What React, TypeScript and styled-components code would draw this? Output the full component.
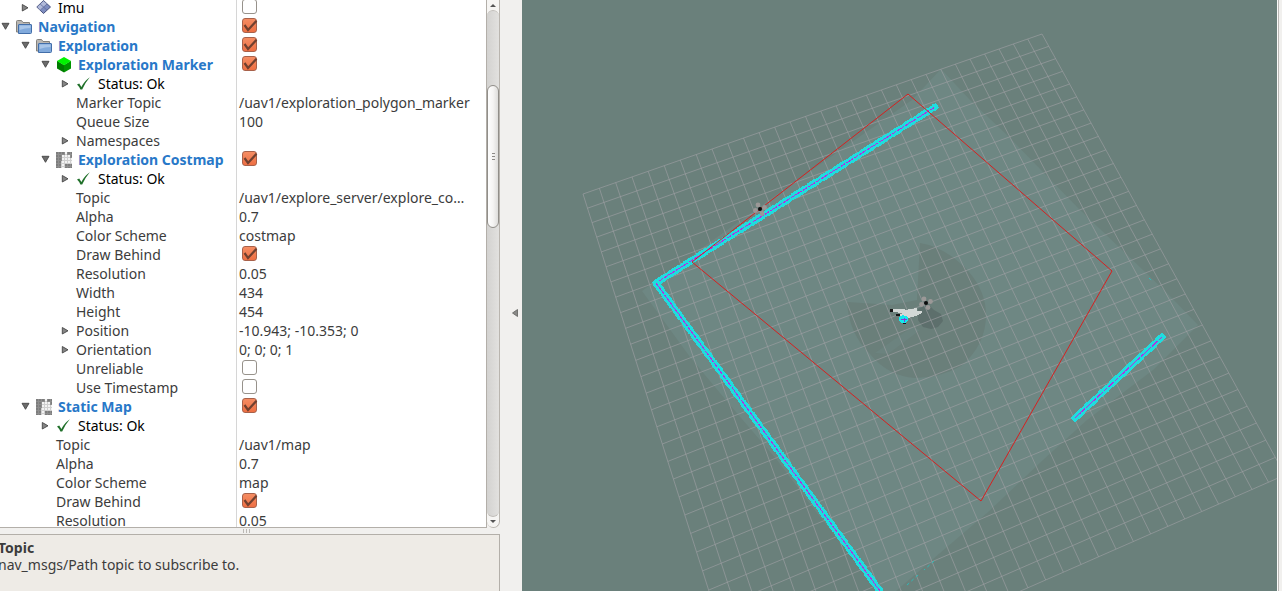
import React from 'react';
import styled, { createGlobalStyle, css } from 'styled-components';

const GlobalStyle = createGlobalStyle`
  *, *::before, *::after { box-sizing: border-box; }
  html, body { margin: 0; height: 100%; }
  #root { height: 100%; }
  body {
    overflow: hidden;
    background: #f1f0ee;
    color: #3c3c3c;
    font-family: 'Noto Sans', 'Open Sans', sans-serif;
    font-size: 14px;
  }
`;

const Window = styled.div`
  display: flex;
  height: 100vh;
  overflow: hidden;
`;

const DisplaysPanel = styled.aside`
  display: flex;
  flex-direction: column;
  flex: none;
  width: 500px;
`;

const TreeArea = styled.div`
  display: flex;
  flex: 1;
  min-height: 0;
`;

const TreeView = styled.div`
  display: flex;
  flex: 1;
  min-width: 0;
  overflow: hidden;
  background: #fff;
  border-right: 1px solid #b3afa9;
  border-bottom: 1px solid #b3afa9;
`;

const TreeTable = styled.table`
  flex: 1;
  width: 100%;
  margin-top: -2px;
  border-collapse: separate;
  border-spacing: 0;
  table-layout: fixed;
  align-self: flex-start;
`;

const TreeRow = styled.tr`
  height: 19px;
`;

const NameCell = styled.th`
  width: 237px;
  height: 19px;
  padding: 0;
  border-right: 1px solid #d6d6d6;
  font-weight: 400;
  text-align: left;
`;

const ValueCell = styled.td`
  height: 19px;
  padding: 0 4px 0 2px;
  line-height: 19px;
  overflow: hidden;
  text-overflow: ellipsis;
  white-space: nowrap;
`;

type Tone = 'display' | 'plain' | 'property';

const toneStyle = {
  display: css`color: #2878c8; font-weight: 700;`,
  plain: css`color: #000;`,
  property: css`color: #3c3c3c;`,
};

const NameContent = styled.div<{ $depth: number }>`
  display: flex;
  align-items: center;
  height: 19px;
  padding-left: ${({ $depth }) => $depth * 20}px;
  line-height: 19px;
  white-space: nowrap;
`;

const Label = styled.span<{ $tone: Tone }>`
  ${({ $tone }) => toneStyle[$tone]}
`;

const ExpanderSlot = styled.span`
  display: flex;
  flex: none;
  width: 16px;
`;

const Expander = styled.button`
  display: flex;
  width: 12px;
  height: 12px;
  padding: 0;
  border: 0;
  background: none;
`;

const IconSlot = styled.span`
  display: flex;
  flex: none;
  width: 22px;
`;

const Check = styled.label`
  display: grid;
  width: 18px;
  height: 17px;
  margin-left: 2px;
  svg { grid-area: 1 / 1; visibility: hidden; pointer-events: none; }
  input:checked + svg { visibility: visible; }
`;

const CheckInput = styled.input`
  grid-area: 1 / 1;
  appearance: none;
  width: 15px;
  height: 15px;
  margin: 0 1px;
  border: 1px solid #97928b;
  border-radius: 3px;
  background: #fff;
  &:checked {
    border-color: #a8614a;
    background: linear-gradient(#f58d63, #ee6f43);
  }
`;

const ScrollBar = styled.div`
  display: flex;
  flex-direction: column;
  flex: none;
  width: 13px;
  border: 1px solid #b9b5af;
  border-top: 0;
  border-left: 0;
  border-radius: 0 0 7px 7px;
  background: #f6f5f3;
`;

const ScrollButton = styled.button`
  display: flex;
  flex: none;
  align-items: center;
  justify-content: center;
  width: 12px;
  height: 10px;
  padding: 0;
  border: 0;
  background: none;
`;

const Trough = styled.div`
  display: grid;
  flex: 1;
  grid-template-rows: 74fr 143fr 289fr;
  border: 1px solid #c0bdb8;
  border-left: 0;
  border-right: 0;
  border-radius: 6px;
  background: linear-gradient(90deg, #d3d2d0, #e2e1df);
`;

const Thumb = styled.div`
  display: flex;
  grid-row: 2;
  flex-direction: column;
  align-items: center;
  justify-content: center;
  gap: 2px;
  border: 1px solid #918e89;
  border-radius: 6px;
  background: linear-gradient(90deg, #fdfdfd, #f5f4f3 50%, #dedddb);
`;

const ThumbNotch = styled.span`
  width: 3px;
  height: 1px;
  background: #8d8a86;
`;

const Splitter = styled.div`
  display: flex;
  flex: none;
  align-items: center;
  justify-content: center;
  gap: 2px;
  height: 6px;
  padding-right: 7px;
`;

const SplitterTick = styled.span`
  width: 1px;
  height: 4px;
  background: #bcb9b5;
`;

const HelpPane = styled.section`
  flex: none;
  height: 57px;
  padding-top: 4px;
  overflow: hidden;
  border-top: 1px solid #b3afa9;
  border-right: 1px solid #b3afa9;
  background: #eeebe6;
`;

const HelpText = styled.p<{ $strong?: boolean }>`
  margin: 0 0 0 -2px;
  font-weight: ${({ $strong }) => ($strong ? 700 : 400)};
  line-height: 17px;
  white-space: nowrap;
`;

const CollapseStrip = styled.div`
  display: flex;
  flex: none;
  align-items: center;
  justify-content: flex-end;
  width: 22px;
  padding: 34px 4px 0 0;
`;

const CollapseButton = styled.button`
  display: flex;
  padding: 0;
  border: 0;
  background: none;
`;

const Viewport = styled.main`
  flex: 1;
  min-width: 0;
  overflow: hidden;
  background: #6a807b;
  svg { display: block; width: 100%; height: 100%; }
`;

const RightEdge = styled.div`
  flex: none;
  width: 5px;
  border-left: 1px solid #fbfbfa;
  background: linear-gradient(90deg, #b9b7b4 1px, #f1f0ee 1px);
`;

/* ---------- icons ---------- */

const ArrowIcon = ({ open }: { open: boolean }) => (
  <svg width="12" height="12" viewBox="0 0 12 12">
    {open ? (
      <path d="M2 2.3H9L5.5 8.3Z" fill="#6c6c6c" stroke="#454545" strokeWidth=".9" />
    ) : (
      <path d="M2.3 2.5V9L8 5.8Z" fill="#858585" stroke="#454545" strokeWidth=".9" />
    )}
  </svg>
);

const FolderIcon = () => (
  <svg width="17" height="16" viewBox="0 0 17 16">
    <path d="M.5 13V2.5Q.5 1.5 1.5 1.5H5.5L7 3.5H13.5V13Z" fill="#b9b7b4" stroke="#83817d" />
    <path d="M2.5 14.5V6Q2.5 5.5 3 5.5H15Q15.5 5.5 15.5 6V13.5Q15.5 14.5 14.5 14.5Z" fill="#81aadc" stroke="#426ea9" />
    <path d="M3.5 6.5H14.5V9Q9 9 3.5 11Z" fill="#a9c6e9" />
  </svg>
);

const ImuIcon = () => (
  <svg width="16" height="16" viewBox="0 0 16 16">
    <path d="M7.5 .5L14.5 7L7.5 13.5L.8 7Z" fill="#7f8ec0" stroke="#48517d" />
    <path d="M7.5 1L11 4L4.2 10.2L1.3 7Z" fill="#b1bad9" />
    <path d="M4.2 4L11 10.2M11 4L4.2 10.2" stroke="#606b9c" strokeWidth=".8" />
  </svg>
);

const CubeIcon = () => (
  <svg width="16" height="16" viewBox="0 0 16 16">
    <path d="M1 3.8L8 8V15.5L1 11.5Z" fill="#007c00" />
    <path d="M15 3.8L8 8V15.5L15 11.5Z" fill="#009400" />
    <path d="M8 0L15 4L8 8.2L1 4Z" fill="#00f400" />
  </svg>
);

const MapIcon = () => (
  <svg width="17" height="16" viewBox="0 0 17 16" shapeRendering="crispEdges">
    <path d="M0 0H16V16H0Z" fill="#f3f3f3" />
    <path d="M0 0H9V3H6V9H5V16H0ZM11 0H16V6H14V3H11ZM9 12H16V16H9Z" fill="#7d7d7d" />
    <path d="M2.5 0V16M5.5 0V16M8.5 0V16M11.5 0V16M14.5 0V16M0 2.5H16M0 5.5H16M0 8.5H16M0 11.5H16M0 14.5H16" stroke="#a4a4a4" strokeOpacity=".45" />
  </svg>
);

const OkIcon = () => (
  <svg width="16" height="16" viewBox="0 0 16 16">
    <path d="M1 8.6L3.2 7.6L5.4 11Q8.5 4.6 13.8 1.2Q8.8 7 6.2 13.6H4.4Q3.6 11 1 8.6Z" fill="#20702a" />
  </svg>
);

const CheckMark = () => (
  <svg width="18" height="17" viewBox="0 0 18 17">
    <path d="M3.5 7L7 12L15.5 2.8" fill="none" stroke="#71402f" strokeWidth="2.2" />
  </svg>
);

const icons = { folder: FolderIcon, imu: ImuIcon, cube: CubeIcon, map: MapIcon, ok: OkIcon };

/* ---------- display tree ---------- */

interface Item {
  depth: number;
  label: string;
  tone?: Tone;
  icon?: keyof typeof icons;
  open?: boolean;
  value?: string | boolean;
}

const items: Item[] = [
  { depth: 1, label: 'Imu', tone: 'plain', icon: 'imu', open: false, value: false },
  { depth: 0, label: 'Navigation', tone: 'display', icon: 'folder', open: true, value: true },
  { depth: 1, label: 'Exploration', tone: 'display', icon: 'folder', open: true, value: true },
  { depth: 2, label: 'Exploration Marker', tone: 'display', icon: 'cube', open: true, value: true },
  { depth: 3, label: 'Status: Ok', tone: 'plain', icon: 'ok', open: false },
  { depth: 3, label: 'Marker Topic', value: '/uav1/exploration_polygon_marker' },
  { depth: 3, label: 'Queue Size', value: '100' },
  { depth: 3, label: 'Namespaces', open: false },
  { depth: 2, label: 'Exploration Costmap', tone: 'display', icon: 'map', open: true, value: true },
  { depth: 3, label: 'Status: Ok', tone: 'plain', icon: 'ok', open: false },
  { depth: 3, label: 'Topic', value: '/uav1/explore_server/explore_co…' },
  { depth: 3, label: 'Alpha', value: '0.7' },
  { depth: 3, label: 'Color Scheme', value: 'costmap' },
  { depth: 3, label: 'Draw Behind', value: true },
  { depth: 3, label: 'Resolution', value: '0.05' },
  { depth: 3, label: 'Width', value: '434' },
  { depth: 3, label: 'Height', value: '454' },
  { depth: 3, label: 'Position', open: false, value: '-10.943; -10.353; 0' },
  { depth: 3, label: 'Orientation', open: false, value: '0; 0; 0; 1' },
  { depth: 3, label: 'Unreliable', value: false },
  { depth: 3, label: 'Use Timestamp', value: false },
  { depth: 1, label: 'Static Map', tone: 'display', icon: 'map', open: true, value: true },
  { depth: 2, label: 'Status: Ok', tone: 'plain', icon: 'ok', open: false },
  { depth: 2, label: 'Topic', value: '/uav1/map' },
  { depth: 2, label: 'Alpha', value: '0.7' },
  { depth: 2, label: 'Color Scheme', value: 'map' },
  { depth: 2, label: 'Draw Behind', value: true },
  { depth: 2, label: 'Resolution', value: '0.05' },
];

const DisplayRow = ({ item }: { item: Item }) => {
  const Icon = item.icon && icons[item.icon];
  return (
    <TreeRow>
      <NameCell scope="row">
        <NameContent $depth={item.depth}>
          <ExpanderSlot>
            {item.open !== undefined && (
              <Expander type="button" aria-label={item.label} aria-expanded={item.open}>
                <ArrowIcon open={item.open} />
              </Expander>
            )}
          </ExpanderSlot>
          {Icon && <IconSlot><Icon /></IconSlot>}
          <Label $tone={item.tone ?? 'property'}>{item.label}</Label>
        </NameContent>
      </NameCell>
      <ValueCell>
        {typeof item.value === 'boolean' ? (
          <Check>
            <CheckInput type="checkbox" defaultChecked={item.value} aria-label={item.label} />
            <CheckMark />
          </Check>
        ) : (
          item.value
        )}
      </ValueCell>
    </TreeRow>
  );
};

/* ---------- 3D view ---------- */

type Point = [number, number];

/* Ground-plane corners in view space: far left, far right, near right, near left. */
const corners: Point[] = [[61, 194], [520, 34], [763, 475], [225, 711]];
const CELLS = 30;

const project = (u: number, v: number): Point => {
  const [[x0, y0], [x1, y1], [x2, y2], [x3, y3]] = corners;
  const dx1 = x1 - x2, dx2 = x3 - x2, sx = x0 - x1 + x2 - x3;
  const dy1 = y1 - y2, dy2 = y3 - y2, sy = y0 - y1 + y2 - y3;
  const det = dx1 * dy2 - dx2 * dy1;
  const g = (sx * dy2 - dx2 * sy) / det;
  const h = (dx1 * sy - sx * dy1) / det;
  const w = g * u + h * v + 1;
  return [
    ((x1 - x0 + g * x1) * u + (x3 - x0 + h * x3) * v + x0) / w,
    ((y1 - y0 + g * y1) * u + (y3 - y0 + h * y3) * v + y0) / w,
  ];
};

const segment = (a: Point, b: Point) =>
  `M${a[0].toFixed(1)} ${a[1].toFixed(1)}L${b[0].toFixed(1)} ${b[1].toFixed(1)}`;

const gridPath = Array.from({ length: CELLS + 1 }, (_, i) => {
  const t = i / CELLS;
  return segment(project(t, 0), project(t, 1)) + segment(project(0, t), project(1, t));
}).join('');

const walls = ['M134 283L413 107', 'M134 283L358 591', 'M553 418L640 337'];

const Wall = ({ d }: { d: string }) => (
  <g fill="none" shapeRendering="crispEdges">
    <path d={d} stroke="#20dcde" strokeWidth="6" strokeLinecap="square" />
    <path d={d} stroke="#20dcde" strokeWidth="7" strokeDasharray="11 4 14 5 9 6" />
    <path d={d} stroke="#b62be0" strokeWidth="1" strokeDasharray="8 1 5 1" />
  </g>
);

const Drone = ({ x, y }: { x: number; y: number }) => (
  <g transform={`translate(${x} ${y})`}>
    <g fill="#9b9897">
      <circle cx="-2" cy="-4" r="2.4" />
      <circle cx="4.5" cy="-1.5" r="2.4" />
      <circle cx="-4.5" cy="1.5" r="2.4" />
      <circle cx="2" cy="4.5" r="2.4" />
    </g>
    <circle r="2" fill="#0b0b0b" />
  </g>
);

const Scene = () => (
  <svg viewBox="0 0 755 591" preserveAspectRatio="xMinYMin slice" role="img" aria-label="3D view">
    <path d="M419 69L448 100L485 135L521 172L558 210L598 248L645 293L676 325L631 370L565 420L521 460L465 513L418 553L374 591H358L295 513L255 460L208 405L168 357L120 291L240 205L390 100Z" fill="#6e8783" />
    <path d="M398 243Q424 247 447 272Q464 292 464 315Q464 345 439 366Q418 378 393 378Q366 376 348 354Q327 334 325 302L370 305L395 300Z" fill="#6a7f7a" />
    <path d="M353 353L390 327L398 330L366 354Z" fill="#6e8783" opacity=".5" />
    <path d="M396 309L406 304L412 310L419 314L421 321L416 327L409 329L401 327L396 320Z" fill="#5d6f6c" />
    <path d={gridPath} fill="none" stroke="#a0a0a4" strokeWidth="1" strokeOpacity=".62" />
    {walls.map((d) => <Wall key={d} d={d} />)}
    <path d="M386 94L590 271L459 501L170 262Z" fill="none" stroke="#d62020" strokeWidth="1" />
    <path d="M627 278L630 281M412 561L402 570M396 575L384 586" stroke="#2bbdbb" strokeWidth="1" strokeDasharray="3 3" />
    <g shapeRendering="crispEdges">
      <path d="M370 309H383V310L395 308V311L400 311V313L394 316L386 318L375 316L381 313L370 312Z" fill="#d2d8d6" />
      <path d="M368 309H371V312H368ZM374 314H378V316H374ZM381 322H384V324H381Z" fill="#161616" />
      <path d="M377 317L381 315L386 317V321L383 323H379L377 320Z" fill="#12e8ec" />
      <path d="M379 319H385M382 318V322" stroke="#8b35d8" />
    </g>
    <Drone x={238} y={209} />
    <Drone x={404} y={303} />
  </svg>
);

export default function App() {
  return (
    <>
      <GlobalStyle />
      <Window>
        <DisplaysPanel>
          <TreeArea>
            <TreeView>
              <TreeTable>
                <tbody>
                  {items.map((item, index) => <DisplayRow key={index} item={item} />)}
                </tbody>
              </TreeTable>
            </TreeView>
            <ScrollBar>
              <ScrollButton type="button" aria-label="Scroll up">
                <svg width="6" height="4" viewBox="0 0 6 4"><path d="M0 4L3 1L6 4Z" fill="#555" /></svg>
              </ScrollButton>
              <Trough>
                <Thumb><ThumbNotch /><ThumbNotch /><ThumbNotch /></Thumb>
              </Trough>
              <ScrollButton type="button" aria-label="Scroll down">
                <svg width="6" height="4" viewBox="0 0 6 4"><path d="M0 0L3 3L6 0Z" fill="#555" /></svg>
              </ScrollButton>
            </ScrollBar>
          </TreeArea>
          <Splitter><SplitterTick /><SplitterTick /><SplitterTick /></Splitter>
          <HelpPane>
            <HelpText $strong>Topic</HelpText>
            <HelpText>nav_msgs/Path topic to subscribe to.</HelpText>
          </HelpPane>
        </DisplaysPanel>
        <CollapseStrip>
          <CollapseButton type="button" aria-label="Hide panel">
            <svg width="6" height="8" viewBox="0 0 6 8"><path d="M.5 4L5.5 .5V7.5Z" fill="#8a8a88" stroke="#5f5f5d" strokeWidth=".8" /></svg>
          </CollapseButton>
        </CollapseStrip>
        <Viewport><Scene /></Viewport>
        <RightEdge />
      </Window>
    </>
  );
}
